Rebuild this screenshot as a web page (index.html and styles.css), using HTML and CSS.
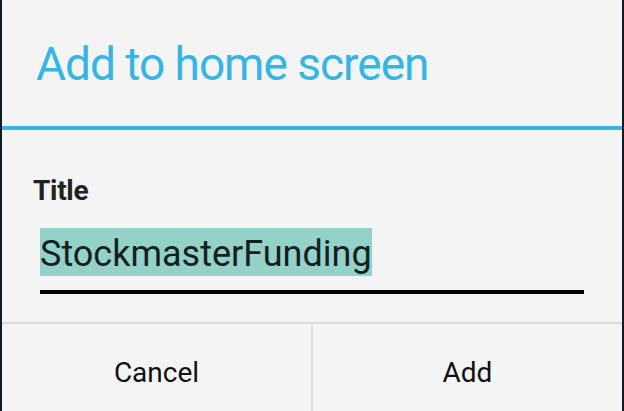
FILE: index.html
```html
<!DOCTYPE html>
<html>
<head>
<meta charset="utf-8">
<link rel="stylesheet" href="styles.css">
</head>
<body>
<div class="dialog">
  <div class="header">Add to home screen</div>
  <div class="accent"></div>
  <div class="content">
    <div class="label">Title</div>
    <div class="field"><span class="selected">StockmasterFunding</span></div>
  </div>
  <div class="buttons">
    <div class="btn">Cancel</div>
    <div class="btn">Add</div>
  </div>
</div>
</body>
</html>
```
FILE: styles.css
```css
html, body {
  margin: 0;
  padding: 0;
  height: 100%;
}
body {
  background: #121a22;
  font-family: Roboto, "Noto Sans", sans-serif;
  overflow: hidden;
}
.dialog {
  margin: 0 2px;
  height: 411px;
  background: #f4f4f4;
  display: flex;
  flex-direction: column;
}
.header {
  box-sizing: border-box;
  height: 126px;
  padding: 41px 0 0 34px;
  font-size: 46px;
  line-height: 46px;
  letter-spacing: -1px;
  color: #33b5e5;
}
.accent {
  height: 4px;
  background: #33b5e5;
}
.content {
  padding: 47px 38px 0 31px;
  height: 194px;
  box-sizing: border-box;
  border-bottom: 2px solid #dcdcdc;
}
.label {
  font-size: 28px;
  line-height: 28px;
  font-weight: bold;
  letter-spacing: -0.3px;
  color: #222222;
}
.field {
  margin: 23px 0 0 7px;
  padding-bottom: 14px;
  border-bottom: 4px solid #000;
}
.selected {
  display: inline-block;
  height: 48px;
  box-sizing: border-box;
  padding-top: 4px;
  line-height: 44px;
  font-size: 36px;
  color: #15201e;
  background: #93d1c9;
}
.buttons {
  flex: 1;
  display: flex;
}
.btn {
  flex: 1;
  padding-top: 35px;
  text-align: center;
  font-size: 28px;
  line-height: 28px;
  color: #111;
}
.btn + .btn {
  border-left: 2px solid #dcdcdc;
}
```
